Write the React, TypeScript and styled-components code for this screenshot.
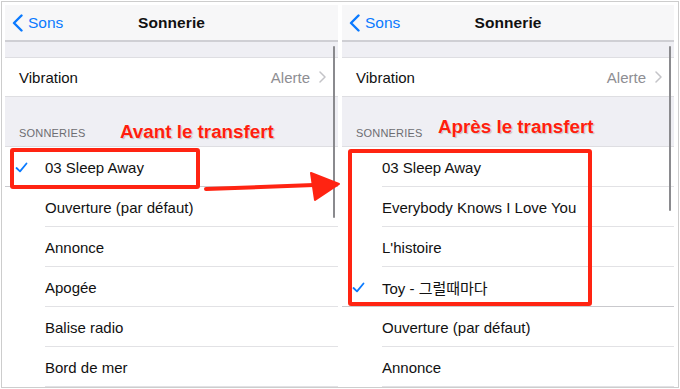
import React from "react";
import styled, { createGlobalStyle } from "styled-components";

const GlobalStyle = createGlobalStyle`
  html, body {
    margin: 0;
    padding: 0;
    background: #fff;
  }
  body {
    font-family: "Liberation Sans", Arial, "Noto Sans CJK KR", sans-serif;
    -webkit-font-smoothing: antialiased;
  }
`;

const Frame = styled.div`
  position: relative;
  box-sizing: border-box;
  width: 678px;
  height: 387px;
  margin: 1px;
  border: 1px solid #cdcdcd;
  padding: 3px 3px 0 3px;
  display: flex;
  gap: 4px;
  overflow: hidden;
`;

const Panel = styled.div`
  position: relative;
  flex: 0 0 ${(p: { $w: number }) => p.$w}px;
  display: flex;
  flex-direction: column;
  background: #efeff4;
  overflow: hidden;
`;

const NavBar = styled.div`
  position: relative;
  height: 35px;
  flex: 0 0 35px;
  background: #f7f7f8;
  border-bottom: 2px solid #cfcfd4;
  display: flex;
  align-items: center;
  justify-content: center;
`;

const Back = styled.div`
  position: absolute;
  left: 7px;
  top: 0;
  bottom: 0;
  display: flex;
  align-items: center;
  gap: 5px;
  color: #0a7aff;
  font-size: 15.5px;
`;

const Title = styled.div`
  font-size: 15.5px;
  font-weight: 700;
  color: #111;
  letter-spacing: 0.1px;
`;

const Spacer = styled.div`
  height: ${(p: { $h: number }) => p.$h}px;
  flex: 0 0 auto;
`;

const Cell = styled.div`
  height: 40px;
  flex: 0 0 40px;
  background: #fff;
  border-top: 1px solid #dedee2;
  border-bottom: 1px solid #dedee2;
  box-sizing: border-box;
  display: flex;
  align-items: center;
  padding: 0 12px 0 14px;
  font-size: 15px;
  color: #111;
`;

const Grow = styled.div`
  flex: 1;
`;

const Detail = styled.span`
  color: #8e8e93;
  display: flex;
  align-items: center;
  gap: 9px;
`;

const SectionHeader = styled.div`
  height: 50px;
  flex: 0 0 50px;
  box-sizing: border-box;
  display: flex;
  align-items: flex-end;
  padding: 0 0 7px 14px;
  font-size: 11px;
  color: #6d6d72;
  letter-spacing: 0.2px;
  border-bottom: 1px solid #dedee2;
`;

const List = styled.div`
  background: #fff;
  flex: 1;
`;

const Row = styled.div`
  position: relative;
  height: 40px;
  display: flex;
  align-items: center;
  font-size: 15px;
  color: #111;
  padding-left: 40px;
  &::after {
    content: "";
    position: absolute;
    bottom: 0;
    right: 0;
    left: ${(p: { $full?: boolean }) => (p.$full ? "0" : "40px")};
    height: 1px;
    background: ${(p: { $full?: boolean }) => (p.$full ? "#c9c9cd" : "#e2e2e5")};
  }
`;

const Check = styled.span`
  position: absolute;
  left: 10px;
  top: 0;
  bottom: 0;
  display: flex;
  align-items: center;
`;

const Scroll = styled.div`
  position: absolute;
  right: 3px;
  top: 41px;
  width: 2px;
  height: ${(p: { $h: number }) => p.$h}px;
  background: #8a8a8e;
  border-radius: 1px;
`;

const Note = styled.div`
  position: absolute;
  font-size: 18.8px;
  font-weight: 700;
  color: #ff1e0e;
  white-space: nowrap;
  text-shadow: 0 0 2px #fff, 1px 1px 1px rgba(0, 0, 0, 0.25);
`;

const Mark = styled.div`
  position: absolute;
  box-sizing: border-box;
  border: 4px solid #ff2412;
  border-radius: 3px;
`;

const ArrowSvg = styled.svg`
  position: absolute;
  left: 0;
  top: 0;
  pointer-events: none;
`;

const Chevron = () => (
  <svg width="11" height="18" viewBox="0 0 11 18">
    <path d="M9.5 1.5 L2 9 L9.5 16.5" fill="none" stroke="#0a7aff" strokeWidth="2.4" strokeLinecap="round" strokeLinejoin="round" />
  </svg>
);

const Disclosure = () => (
  <svg width="7" height="12" viewBox="0 0 7 12">
    <path d="M1 1 L6 6 L1 11" fill="none" stroke="#c4c4c8" strokeWidth="1.5" strokeLinecap="round" strokeLinejoin="round" />
  </svg>
);

const Tick = () => (
  <svg width="13" height="11" viewBox="0 0 13 11">
    <path d="M1.5 6 L5 9.3 L11.5 1.5" fill="none" stroke="#0a7aff" strokeWidth="1.8" strokeLinecap="round" strokeLinejoin="round" />
  </svg>
);

type Song = { name: string; checked?: boolean; full?: boolean };

type PanelProps = {
  width: number;
  songs: Song[];
  scroll: number;
  children?: React.ReactNode;
};

const Screen: React.FC<PanelProps> = ({ width, songs, scroll, children }) => (
  <Panel $w={width}>
    <NavBar>
      <Back>
        <Chevron />
        Sons
      </Back>
      <Title>Sonnerie</Title>
    </NavBar>
    <Spacer $h={15} />
    <Cell>
      Vibration
      <Grow />
      <Detail>
        Alerte
        <Disclosure />
      </Detail>
    </Cell>
    <SectionHeader>SONNERIES</SectionHeader>
    <List>
      {songs.map((s) => (
        <Row key={s.name} $full={s.full}>
          {s.checked && (
            <Check>
              <Tick />
            </Check>
          )}
          {s.name}
        </Row>
      ))}
    </List>
    <Scroll $h={scroll} />
    {children}
  </Panel>
);

const before: Song[] = [
  { name: "03 Sleep Away", checked: true, full: true },
  { name: "Ouverture (par défaut)" },
  { name: "Annonce" },
  { name: "Apogée" },
  { name: "Balise radio" },
  { name: "Bord de mer" },
];

const after: Song[] = [
  { name: "03 Sleep Away" },
  { name: "Everybody Knows I Love You" },
  { name: "L'histoire" },
  { name: "Toy - 그럴때마다", checked: true, full: true },
  { name: "Ouverture (par défaut)" },
  { name: "Annonce" },
];

export default function App() {
  return (
    <>
      <GlobalStyle />
      <Frame>
        <Screen width={333} songs={before} scroll={172}>
          <Note style={{ left: 115, top: 116 }}>Avant le transfert</Note>
          <Mark style={{ left: 5, top: 143, width: 190, height: 41 }} />
        </Screen>
        <Screen width={332} songs={after} scroll={165}>
          <Note style={{ left: 96, top: 111 }}>Après le transfert</Note>
          <Mark style={{ left: 6, top: 144, width: 244, height: 157 }} />
        </Screen>
        <ArrowSvg width="676" height="385">
          <path d="M204 187 L312 183" stroke="#ff2412" strokeWidth="4" strokeLinecap="round" />
          <path d="M309 171 L337 182 L313 198 Z" fill="#ff2412" stroke="#ff2412" strokeWidth="2" strokeLinejoin="round" />
        </ArrowSvg>
      </Frame>
    </>
  );
}
